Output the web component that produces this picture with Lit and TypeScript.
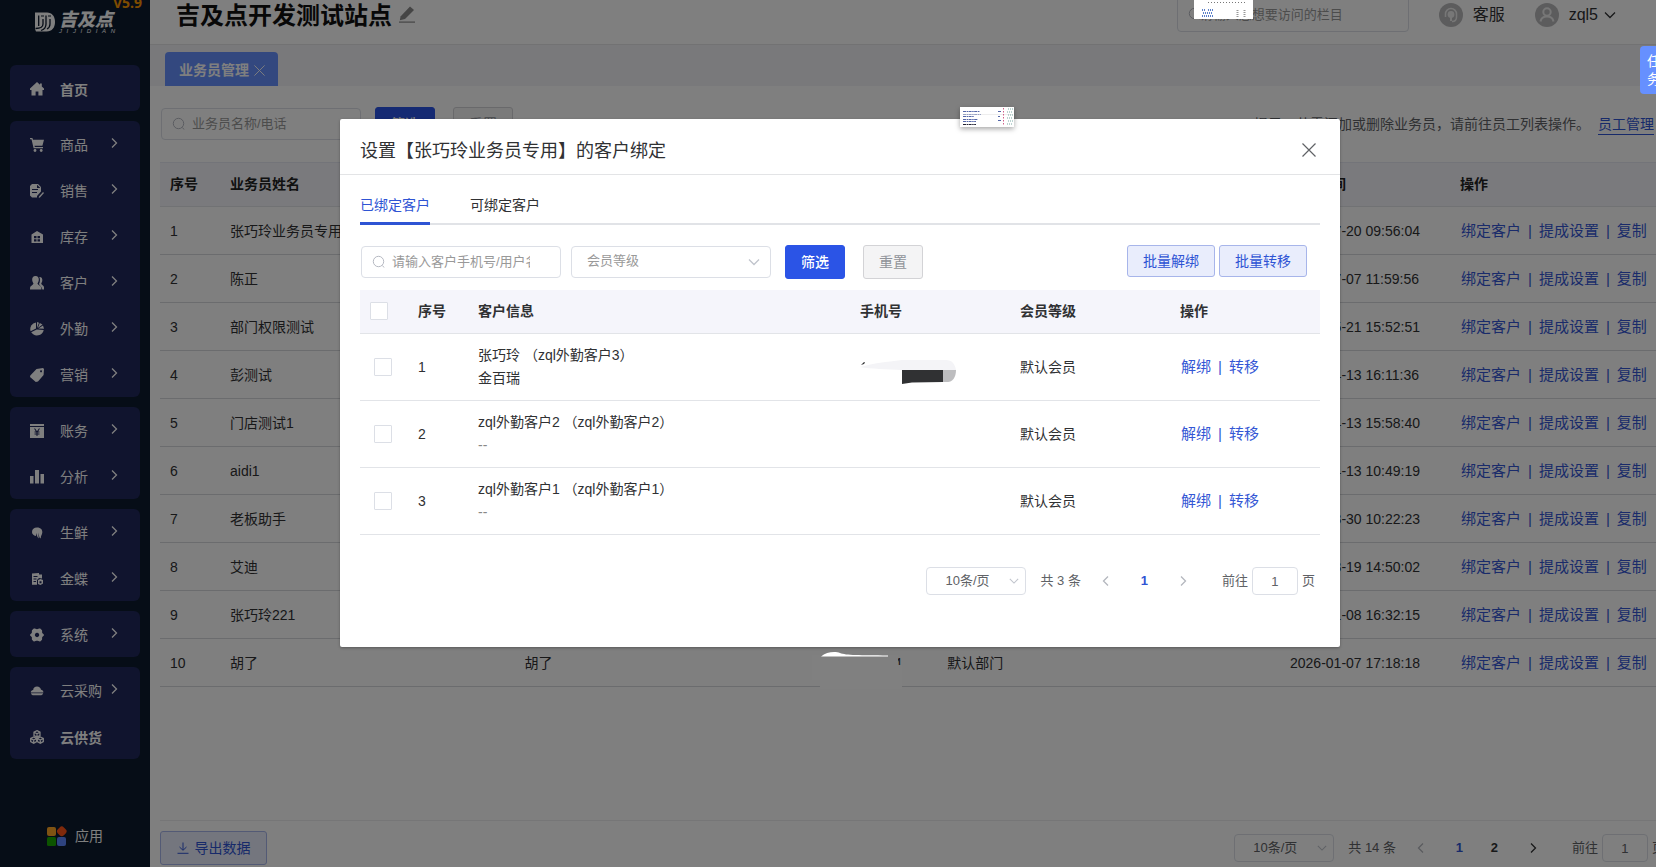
import { LitElement, html, css, svg, nothing } from "lit";
import { customElement } from "lit/decorators.js";

const icons: Record<string, unknown> = {
  home: svg`<path d="M7 0 0 6.400V8h1.500v5.500H5.600V9.500h2.800v4h4.100V8H14V6.400L11.800 4.400V1.500H10v1.300z"/>`,
  cart: svg`<path d="M0 0h2.400l.6 1.800H14l-1.600 6H4.500l.3 1.200H13v1.200H3.600L1.500 1.200H0z"/><circle cx="5" cy="12.500" r="1.400"/><circle cx="11.200" cy="12.500" r="1.400"/>`,
  sale: svg`<path fill-rule="evenodd" d="M2 0h6l3 3v4.500L7 12v1.500H2L0 11.500V2zM2 5v1h6V5zM2 8v1h5V8zM7 .8V4h3.400z"/><path d="M9 12.500 13 8l1 1-3.800 4.300L8.800 14z"/>`,
  stock: svg`<path fill-rule="evenodd" d="M7 1 13 4.500v8.500H1.500V4.500zM4 6v2.300h2.500V6zm3.500 0v2.300H10V6zM4 9.300v2.200h2.500V9.300zm3.500 0v2.200H10V9.300z"/>`,
  user: svg`<path d="M5.500 0C8 0 9 2 8.800 4c-.1 1.600-.8 2.800-1.300 3.400.3 1.600 3.500 2 3.800 4.200l.1 1.900H0l.1-1.900C.4 9.400 3.200 9 3.500 7.400 3 6.800 2.300 5.600 2.200 4 2 2 3 0 5.500 0z"/><path d="M9.500 1c2.300 0 3 1.700 2.800 3.500-.1 1.300-.6 2.300-1.100 2.900.3 1.400 2.500 1.800 2.800 3.600v2.500h-1.700C12 10.700 9.600 9.500 9 7.900 10.200 6 10.300 2.700 9.300 1z"/>`,
  pie: svg`<path d="M6 .5v6L.6 9.200A6.700 6.700 0 0 1 6 .5z"/><path d="M7 0v6l2-5.300zM9.800 1 7.800 6l4.700-3.500zM13 3.500 8.300 6.500l5.700.2z"/><path d="M1.200 10.300 6.700 7.500l7 .4A6.900 6.900 0 0 1 1.200 10.300z"/>`,
  tag: svg`<path fill-rule="evenodd" d="M6.500 1 13 0l1 1-.4 6L8 13.600 5.800 14 0 9l.3-1.500zM11 2.200a1 1 0 1 0 .1 0z"/>`,
  money: svg`<path fill-rule="evenodd" d="M0 0h14v2H0zM0 3h14v11H0zm4 1.500 1.900 3H4.500v1h2v1h-2v1h2V12h1v-1.500h2v-1h-2v-1h2v-1H8.100l1.900-3H8.900L7 7.300 5.100 4.500z"/>`,
  bars: svg`<path d="M0 6h3.500v7.500H0zM5 0h4v13.500H5zM10.500 4H14v9.500h-3.500z"/>`,
  fresh: svg`<path d="M7 1.500c4 0 5.500 2.500 5.300 5-.2 2.300-1.500 3-1.600 6L9.500 11.500 8 6.500l.8 6L7.500 11 6 7v3C3.500 9.500 2 8 2 6 2 3 4 1.500 7 1.500z"/>`,
  ledger: svg`<path fill-rule="evenodd" d="M2 1.500 9 1v1.500h3v4L9 6 7 8v4.800H2zM3.500 4v1h4V4zm0 2.500v1h3v-1zm0 2.500v1h2.500V9zM8 8l2.500-1L13 8v3.500L10.500 13 8 12zm1.500 1.200v2h2v-2z"/>`,
  gear: svg`<path fill-rule="evenodd" d="M3.500.8C4.500 0 5.500 1.200 7 1.200S9.500 0 10.500.8l1.500 1.500c.5.900-.3 1.700.3 2.700.5.900 1.700 1 1.700 2s-1.200 1.100-1.700 2c-.6 1 .2 1.800-.3 2.700l-1.500 1.500c-1 .8-2-.4-3.500-.4s-2.500 1.200-3.500.4L2 11.700c-.5-.9.300-1.700-.3-2.700C1.200 8.100 0 8 0 7s1.200-1.100 1.700-2c.6-1-.2-1.800.3-2.700zM7 4.800a2.200 2.200 0 1 0 .1 0z"/>`,
  cloud: svg`<path d="M3.200 6C3.200 3.800 4.800 2.500 7 2.500s3.800 1.300 4 3.300c1.600.2 2.600 1.300 2.400 2.800H.8C.6 7.300 1.600 6.200 3.200 6zM1 9.300h12.200c-.5 1.600-1.500 2-2.700 2H3.700C2.200 11.300 1.300 10.900 1 9.300z"/>`,
  cubes: svg`<g fill="none" stroke="currentColor" stroke-width="1.300"><path d="M7 .7 10 2.200v3.300L7 7 4 5.500V2.200zM4 2.200l3 1.600 3-1.600M7 3.800V7M3.700 7l3 1.500v3.200l-3 1.500-3-1.500V8.500zM.7 8.500l3 1.600 3-1.600M3.700 10v3M10.300 7l3 1.500v3.200l-3 1.500-3-1.500V8.500zM7.300 8.500l3 1.600 3-1.600M10.300 10v3"/></g>`,
};

interface MenuItem { icon: string; text: string; strong?: boolean; }

const menu: MenuItem[][] = [
  [{ icon: "home", text: "首页", strong: true }],
  [
    { icon: "cart", text: "商品" },
    { icon: "sale", text: "销售" },
    { icon: "stock", text: "库存" },
    { icon: "user", text: "客户" },
    { icon: "pie", text: "外勤" },
    { icon: "tag", text: "营销" },
  ],
  [{ icon: "money", text: "账务" }, { icon: "bars", text: "分析" }],
  [{ icon: "fresh", text: "生鲜" }, { icon: "ledger", text: "金蝶" }],
  [{ icon: "gear", text: "系统" }],
  [{ icon: "cloud", text: "云采购" }, { icon: "cubes", text: "云供货", strong: true }],
];

const staff = [
  ["张巧玲业务员专用", "2026-07-20 09:56:04"],
  ["陈正", "2026-07-07 11:59:56"],
  ["部门权限测试", "2026-05-21 15:52:51"],
  ["彭测试", "2026-04-13 16:11:36"],
  ["门店测试1", "2026-04-13 15:58:40"],
  ["aidi1", "2026-04-13 10:49:19"],
  ["老板助手", "2026-03-30 10:22:23"],
  ["艾迪", "2026-03-19 14:50:02"],
  ["张巧玲221", "2026-01-08 16:32:15"],
  ["胡了", "2026-01-07 17:18:18"],
];

const customers = [
  { name: "张巧玲 （zql外勤客户3）", company: "金百瑞", masked: true },
  { name: "zql外勤客户2 （zql外勤客户2）", company: "", masked: false },
  { name: "zql外勤客户1 （zql外勤客户1）", company: "", masked: false },
];

const chevron = (dir: "left" | "right" | "down") => html`<svg class="chev" viewBox="0 0 12 12" width="12" height="12" aria-hidden="true">
  <path d=${dir === "left" ? "M8 1.500 3.500 6 8 10.500" : dir === "right" ? "M4 1.500 8.500 6 4 10.500" : "M1 3.500 6 8.500 11 3.500"} fill="none" stroke="currentColor" stroke-width="1.300"/></svg>`;

const cross = (size: number) => html`<svg viewBox="0 0 14 14" width=${size} height=${size} aria-hidden="true">
  <path d="M.5.5 13.500 13.500M13.500.5.5 13.500" fill="none" stroke="currentColor" stroke-width="1.200"/></svg>`;

const lens = html`<svg class="lens" viewBox="0 0 14 14" width="14" height="14" aria-hidden="true">
  <path d="M10.500 10.500 12 12.500" stroke="currentColor"/><circle cx="6.500" cy="6.500" r="5.200" fill="none" stroke="currentColor"/></svg>`;

const shared = css`
  * { box-sizing: border-box; }
  button, input, select { font: inherit; color: inherit; margin: 0; }
  button { cursor: pointer; padding: 0; background: none; border: 0; }
  a { color: inherit; text-decoration: none; }
  svg { display: block; flex: none; }
  .field { display: flex; align-items: center; position: relative; }
  .field .lens { position: absolute; left: 11px; color: #b6b9c2; }
  .box { width: 200px; height: 32px; border: 1px solid #dcdfe6; border-radius: 4px; background: #fff; padding: 0 30px 2px; font-size: 13px; outline: none; }
  .box::placeholder { color: #999; opacity: 1; }
  .pick { appearance: none; width: 100%; border: 1px solid #dcdfe6; border-radius: 4px; background: #fff; font-size: 13px; outline: none; }
  .field .chev { position: absolute; right: 11px; color: #c0c4cc; pointer-events: none; }
  .btn { height: 34px; width: 60px; border-radius: 3px; font-size: 14px; border: 1px solid #d3d3d6; background: #f4f4f5; color: #909399; }
  .btn.primary { background: #2b54e6; border-color: #2b54e6; color: #fff; font-weight: 500; }
  table { width: 100%; border-collapse: separate; border-spacing: 0; table-layout: fixed; }
  th, td { text-align: left; padding: 0 10px; border-bottom: 1px solid #e2e4e8; white-space: nowrap; font-size: 14px; }
  th { font-weight: 700; background: #f5f5fb; color: #303133; padding-bottom: 2px; }
  .ops { display: flex; gap: 7px; font-size: 15px; color: #3457d5; padding-left: 1px; }
`;

@customElement("page-turner")
export class PageTurner extends LitElement {
  static properties = { total: { type: Number }, pages: { type: Number } };
  declare total: number;
  declare pages: number;
  static styles = [shared, css`
    :host { display: flex; align-items: center; font-size: 13px; color: #606266; }
    .size { width: 100px; }
    .size .pick { height: 28px; padding: 0 0 1px 18px; }
    .size .chev { width: 10px; height: 10px; right: 7px; }
    .total { margin: 0 19px 0 14px; white-space: nowrap; }
    .step { width: 12px; height: 28px; display: grid; place-items: center; color: #303133; }
    .step[disabled] { color: #b4b7be; }
    .nums { display: flex; margin: 0 15px; }
    .num { width: 35px; height: 28px; font-weight: 700; color: #303133; }
    .num.on { color: #2f54d4; }
    .jump { display: flex; align-items: center; gap: 4px; margin-left: 33px; white-space: nowrap; }
    .go { width: 46px; height: 28px; text-align: center; border: 1px solid #dcdfe6; border-radius: 4px; background: #fff; padding: 0; outline: none; }
  `];
  render() {
    return html`
      <span class="field size"><select class="pick" aria-label="每页条数"><option>10条/页</option></select>${chevron("down")}</span>
      <span class="total">共 ${this.total} 条</span>
      <button class="step" disabled aria-label="上一页">${chevron("left")}</button>
      <span class="nums">${Array.from({ length: this.pages }, (_, i) => html`<button class="num ${i === 0 ? "on" : ""}">${i + 1}</button>`)}</span>
      <button class="step" ?disabled=${this.pages < 2} aria-label="下一页">${chevron("right")}</button>
      <label class="jump">前往<input class="go" .value=${"1"}>页</label>`;
  }
}

@customElement("side-nav")
export class SideNav extends LitElement {
  static styles = [shared, css`
    :host { display: flex; flex-direction: column; background: #0d1a2f; color: #fff; font-size: 14px; padding: 0 10px 18px; }
    .brand { height: 81px; padding: 28px 0 0 25px; display: flex; gap: 4px; position: relative; }
    .ver { position: absolute; right: -2px; top: 10px; font: 700 14px/18px "Open Sans", sans-serif; color: #ff9800; }
    .word { width: 56px; font-size: 18px; line-height: 16px; font-weight: 900; font-style: italic; }
    .latin { display: flex; justify-content: space-between; font-size: 6px; line-height: 6px; font-weight: 400; }
    .group { background: #20285c; border-radius: 6px; margin: 0 0 10px; padding: 0; list-style: none; }
    .item { height: 46px; display: flex; align-items: center; padding: 2px 20px 0; }
    .name { margin-left: 16px; flex: 1; }
    .strong { font-weight: 700; padding-top: 2px; }
    .item .chev { margin-bottom: 4px; }
    .apps { margin-top: auto; padding-left: 36px; display: flex; align-items: center; gap: 8px; height: 26px; }
  `];
  render() {
    return html`
      <div class="brand">
        <svg viewBox="0 0 20 20" width="20" height="20" fill="none" aria-hidden="true">
          <path d="M0 .5h12c5 0 8 4 8 9.500s-3 9.500-8.500 9.500H1L0 17z" fill="#fff"/>
          <path d="M3.700 3.500V14M8 7v5c0 3-3 4.500-7.500 4.500M11 3.500V12c0 3.500-2 5.500-5 6.500M15 7v5c0 2.500-1 4-3 5" stroke="#0d1a2f" stroke-width="1.300"/>
          <path d="M6 4h3M13 4h3" stroke="#0d1a2f" stroke-width="1.200"/></svg>
        <div class="word">吉及点<div class="latin" aria-label="JIJIDIAN">${[..."JIJIDIAN"].map((c) => html`<span>${c}</span>`)}</div></div>
        <span class="ver">V5.9</span>
      </div>
      ${menu.map((group) => html`<ul class="group">${group.map((m) => html`
        <li><a class="item" href="#">
          <svg viewBox="0 0 14 14" width="14" height="14" fill="currentColor" aria-hidden="true">${icons[m.icon]}</svg>
          <span class="name ${m.strong ? "strong" : ""}">${m.text}</span>
          ${m.strong ? nothing : chevron("right")}
        </a></li>`)}</ul>`)}
      <a class="apps" href="#">
        <svg viewBox="0 0 21 21" width="21" height="21" aria-hidden="true">
          <rect x="1" y="1" width="9" height="9" rx="2" fill="#ffa726"/><rect x="11.500" y="1" width="8.500" height="8.500" rx="3" fill="#ff5216" transform="rotate(45 15.700 5.300)"/>
          <rect x="1" y="11" width="9" height="9" rx="1.500" fill="#18a600"/><rect x="11" y="11" width="9" height="9" rx="2" fill="#5d86ff"/></svg>
        应用</a>`;
  }
}

@customElement("bind-dialog")
export class BindDialog extends LitElement {
  static styles = [shared, css`
    :host { display: block; background: #fff; border-radius: 2px; box-shadow: 0 1px 3px rgba(0, 0, 0, .3); color: #303133; font-size: 14px; padding-bottom: 52px; }
    .head { height: 56px; display: flex; align-items: center; justify-content: space-between; padding: 8px 24px 0 20px; border-bottom: 1px solid #e3e4e6; }
    .title { margin: 0; font-size: 18px; line-height: 26px; font-weight: 400; }
    .close { color: #606266; padding: 0 0 2px; }
    .body { padding: 0 20px; }
    .tabs { display: flex; gap: 40px; margin-top: 10px; box-shadow: inset 0 -2px #e1e3e7; }
    .tab { height: 40px; border-bottom: 3px solid transparent; padding-top: 2px; }
    .tab.on { color: #2f54d4; border-color: #2f54d4; }
    .filters { display: flex; align-items: center; margin: 20px 0 11px; padding: 0 13px 0 1px; gap: 10px; }
    .member { width: 200px; }
    .member .pick { height: 32px; padding: 0 0 2px 15px; color: #999; }
    .filters .primary { margin-left: 4px; }
    .filters .reset { margin-left: 8px; }
    .batch { margin: 0 0 2px auto; display: flex; gap: 4px; }
    .soft { width: 88px; height: 32px; border: 1px solid #a7b5ea; border-radius: 3px; background: #e9edfc; color: #2f54d4; }
    th { height: 44px; }
    td { height: 67px; }
    .c1 { width: 48px; } .c2 { width: 60px; } .c4 { width: 16.667%; } .c6 { width: 150px; }
    .tick { appearance: none; display: block; width: 18px; height: 18px; margin: 0; border: 1px solid #dcdfe6; border-radius: 1px; background: #fff; }
    td .tick { margin-left: 4px; }
    .who { line-height: 23px; }
    .none { color: #888; }
    .scrub { margin-top: 6px; }
    .turner { justify-content: flex-end; margin-top: 32px; padding-right: 5px; }
  `];
  render() {
    return html`
      <div class="head"><h2 class="title">设置【张巧玲业务员专用】的客户绑定</h2><button class="close" aria-label="关闭">${cross(14)}</button></div>
      <div class="body">
        <div class="tabs" role="tablist"><button class="tab on" role="tab" aria-selected="true">已绑定客户</button><button class="tab" role="tab">可绑定客户</button></div>
        <div class="filters">
          <span class="field">${lens}<input class="box" aria-label="客户搜索" placeholder="请输入客户手机号/用户名"></span>
          <span class="field member"><select class="pick" aria-label="会员等级"><option>会员等级</option></select>${chevron("down")}</span>
          <button class="btn primary">筛选</button><button class="btn reset">重置</button>
          <div class="batch"><button class="soft">批量解绑</button><button class="soft">批量转移</button></div>
        </div>
        <table>
          <colgroup><col class="c1"><col class="c2"><col><col class="c4"><col class="c4"><col class="c6"></colgroup>
          <thead><tr><th><input class="tick" type="checkbox" aria-label="全选"></th><th>序号</th><th>客户信息</th><th>手机号</th><th>会员等级</th><th>操作</th></tr></thead>
          <tbody>${customers.map((c, i) => html`<tr>
            <td><input class="tick" type="checkbox" aria-label="选择第${i + 1}行"></td>
            <td>${i + 1}</td>
            <td class="who"><div>${c.name}</div>${c.company ? html`<div>${c.company}</div>` : html`<div class="none">--</div>`}</td>
            <td>${c.masked ? html`<svg class="scrub" viewBox="0 0 96 27" width="96" height="27" aria-hidden="true">
              <path d="M0 10C15 6 25 5 42 3H86c6 0 9 4 10 10H42C28 12 10 12 0 10z" fill="#f4f4f7"/><path d="M1 8 4 5 5 5.500 4 7z" fill="#303133"/>
              <path d="M83 13h13c0 8-4 12-8 12h-5z" fill="#bdbdbf"/><path d="M42 13h41v12L52 25.500 42 27z" fill="#303133"/></svg>` : nothing}</td>
            <td>默认会员</td>
            <td><span class="ops"><a href="#">解绑</a><span>|</span><a href="#">转移</a></span></td>
          </tr>`)}</tbody>
        </table>
        <page-turner class="turner" .total=${3} .pages=${1}></page-turner>
      </div>`;
  }
}

@customElement("app-root")
export class AppRoot extends LitElement {
  static styles = [shared, css`
    :host { display: block; position: relative; height: 100vh; overflow: hidden; background: #fff; color: #303133; font: 14px/20px "Liberation Sans", "Noto Sans CJK SC", sans-serif; }
    .page { display: grid; grid-template-columns: 150px minmax(0, 1fr); height: calc(100vh + 16px); margin: -16px -24px 0 0; }
    .main { display: flex; flex-direction: column; min-width: 0; }
    .top { height: 61px; display: flex; align-items: center; padding: 0 64px 0 26px; border-bottom: 1px solid #e4e4e6; font-size: 16px; }
    .site { font-size: 24px; line-height: 30px; font-weight: 700; margin: 0 7px 0 0; padding-top: 4px; color: #111; white-space: nowrap; }
    .pencil { color: #8a8a8a; }
    .seek { margin: 0 30px 0 auto; }
    .seek .box { width: 232px; height: 36px; padding: 0 22px; }
    .link { display: flex; align-items: center; gap: 10px; padding-top: 2px; margin-right: 30px; white-space: nowrap; }
    .link + .link { margin-right: 0; }
    .me { display: flex; align-items: center; gap: 6px; }
    .tabs { background: #f3f3f6; height: 41px; padding: 7px 15px 0; }
    .tab { display: inline-flex; align-items: center; gap: 5px; height: 34px; padding: 2px 13px 0 14px; background: #6690ff; color: #fff; font-weight: 700; border-radius: 4px 4px 0 0; }
    .content { flex: 1; display: flex; flex-direction: column; padding: 21px 10px 0; min-height: 0; }
    .filters { display: flex; align-items: center; padding: 0 16px 0 1px; margin-bottom: 21px; }
    .filters .btn { margin-left: 14px; }
    .filters .reset { margin-left: 18px; }
    .tip { margin-left: auto; color: #606266; white-space: nowrap; }
    .staff { color: #2f54d4; border-bottom: 1px solid #2f54d4; margin-left: 8px; white-space: nowrap; }
    th { height: 45px; border-top: 1px solid #e6e8f2; color: #222; }
    td { height: 48px; border-color: #d6d8dc; }
    .n { width: 60px; } .name { width: 19.5%; } .phone { width: 131px; } .dept { width: 22.7%; } .date { width: 170px; } .act { width: 220px; }
    .foot { margin-top: auto; height: 47px; padding: 10px 5px 0 0; display: flex; align-items: flex-start; justify-content: space-between; border-top: 1px solid #ececee; }
    .export { display: flex; align-items: center; justify-content: center; gap: 6px; width: 107px; height: 34px; border: 1px solid #a7b5ea; border-radius: 3px; background: #e9edfc; color: #2f54d4; }
    .turner { padding-top: 3px; }
    .mask { position: absolute; inset: 0 -24px 0 0; background: rgba(0, 0, 0, .5); display: flex; justify-content: center; align-items: flex-start; padding-top: 119px; }
    .dialog { width: 1000px; }
    .task { position: absolute; right: -24px; top: 46px; width: 40px; padding: 6px 19px 6px 7px; line-height: 18px; background: #6690ff; color: #fff; border-radius: 4px 0 0 4px; }
    .thumb { position: absolute; background: #fff; }
    .t1 { left: 960px; top: 107px; box-shadow: 0 2px 5px rgba(0, 0, 0, .35); }
    .t2 { left: 1194px; top: 0; }
    .smear { position: absolute; left: 812px; top: 650px; }
  `];
  render() {
    return html`
      <div class="page">
        <side-nav></side-nav>
        <div class="main">
          <header class="top">
            <h1 class="site">吉及点开发测试站点</h1>
            <svg class="pencil" viewBox="0 0 16 18" width="16" height="18" fill="currentColor" aria-hidden="true"><path d="M1.500 11.500 11 1.500 15 5 6 14 .8 15.200z"/><path d="M0 16.500h16v1.200H0z"/></svg>
            <span class="field seek">${lens}<input class="box" aria-label="栏目搜索" placeholder="请输入您想要访问的栏目"></span>
            <a class="link" href="#"><svg viewBox="0 0 24 24" width="24" height="24" aria-hidden="true"><circle cx="12" cy="12" r="12" fill="#b9b9bb"/>
              <path d="M6.500 14v-3a5.500 5.500 0 0 1 11 0v3c0 3-2 4.500-4.500 4.500" fill="none" stroke="#eee" stroke-width="1.500"/><circle cx="12" cy="11.500" r="3.400" fill="#eee"/><path d="M11 14h2v4h-2z" fill="#eee"/></svg>客服</a>
            <a class="link" href="#"><svg viewBox="0 0 24 24" width="24" height="24" aria-hidden="true"><circle cx="12" cy="12" r="12" fill="#b9b9bb"/>
              <g fill="none" stroke="#eee" stroke-width="2"><circle cx="12" cy="9" r="3.700"/><path d="M5.500 18.500c.6-3.500 3-5 6.500-5s5.900 1.500 6.500 5"/></g></svg><span class="me">zql5${chevron("down")}</span></a>
          </header>
          <nav class="tabs"><button class="tab">业务员管理${cross(11)}</button></nav>
          <section class="content">
            <div class="filters">
              <span class="field">${lens}<input class="box" aria-label="业务员搜索" placeholder="业务员名称/电话"></span>
              <button class="btn primary">筛选</button><button class="btn reset">重置</button>
              <span class="tip">提示：若需添加或删除业务员，请前往员工列表操作。</span><a class="staff" href="#">员工管理</a>
            </div>
            <table>
              <colgroup><col class="n"><col class="name"><col><col class="phone"><col class="dept"><col class="date"><col class="act"></colgroup>
              <thead><tr><th>序号</th><th>业务员姓名</th><th>登录账号</th><th>手机号</th><th>所属部门</th><th>创建时间</th><th>操作</th></tr></thead>
              <tbody>${staff.map(([name, date], i) => html`<tr>
                <td>${i + 1}</td><td>${name}</td><td>${name}</td><td>13800000004</td><td>默认部门</td><td>${date}</td>
                <td><span class="ops"><a href="#">绑定客户</a><span>|</span><a href="#">提成设置</a><span>|</span><a href="#">复制</a></span></td></tr>`)}</tbody>
            </table>
            <footer class="foot">
              <button class="export"><svg viewBox="0 0 12 12" width="12" height="12" fill="none" stroke="currentColor" aria-hidden="true"><path d="M6 .5V8M2.500 5 6 8.300 9.500 5M.5 11.300h11"/></svg>导出数据</button>
              <page-turner class="turner" .total=${14} .pages=${2}></page-turner>
            </footer>
          </section>
        </div>
      </div>
      <div class="mask"><bind-dialog class="dialog" role="dialog"></bind-dialog></div>
      <div class="task">任务</div>
      <svg class="thumb t1" viewBox="0 0 54 20" width="54" height="20" aria-hidden="true">
        <g fill="none" stroke="#5366a8" stroke-dasharray="3 .6 1.500 .5"><path d="M3 4.500h17M3 7.500h18M3 9.500h11M3 12.500h15M3 14.500h13M38 4.500h3M38 9.500h2M38 13.500h3"/><path d="M3 17.500h13" stroke="#223"/></g>
        <path d="M3 7.500h50" stroke="#ddd" stroke-width=".5"/><path d="M43.500 1v18" stroke="#d0608a" stroke-dasharray="1.500 1.500"/><path d="M48 2h5M47 5h5M48 8h5M47 11h5M48 14h5M47 17h5" stroke="#77a9a3" stroke-dasharray="1 1"/></svg>
      <svg class="thumb t2" viewBox="0 0 59 19" width="59" height="19" aria-hidden="true">
        <path d="M14 2.500h38" stroke="#777" stroke-dasharray="1 2"/><path d="M8 10h4M14 10h6M9 13h10M8 16h12" stroke="#5b7fc8" stroke-dasharray="1 1" stroke-width="2"/><path d="M43.500 10v7M50.500 10v7" stroke="#999" stroke-dasharray="1 1" stroke-width="2"/></svg>
      <svg class="smear" viewBox="0 0 90 40" width="90" height="40" aria-hidden="true">
        <path d="M0 5h86v10h4v24H8V30H0z" fill="#808080"/><path d="M9 6.500C14 2 23 1 28 3c6 2.500 20 2 48 2.500v1z" fill="#fff"/></svg>`;
  }
}
